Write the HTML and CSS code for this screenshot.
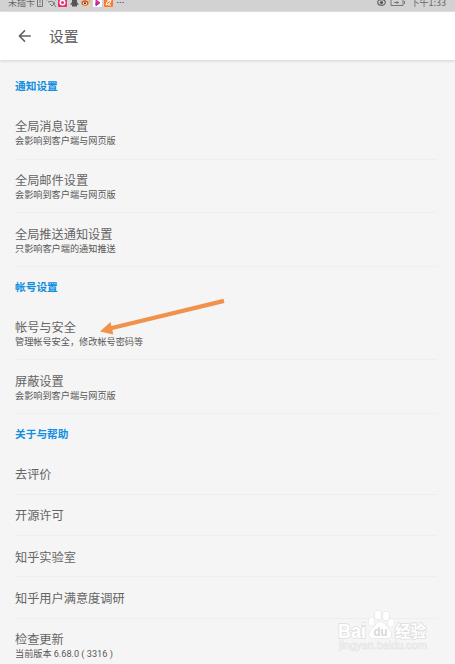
FILE: index.html
```html
<!DOCTYPE html>
<html lang="zh-CN">
<head>
<meta charset="utf-8">
<title>设置</title>
<link rel="stylesheet" href="styles.css">
</head>
<body>
<div class="screen">
  <div class="status">
    <span class="status-text">未插卡</span>
    <svg class="status-icons" width="92" height="11" viewBox="0 0 92 11">
      <g fill="none" stroke="#777" stroke-width="1">
        <path d="M1.500-1h5v7.500h-5zM4 0v3M4 4v1.300"/>
        <path d="M10 0q5-3 10 0M12 2q4-2 7 1M14 4l2 2 3-3M17 3l3 4"/>
      </g>
      <rect x="22" y="-2" width="9" height="9" rx="1" fill="#ef2e68"/>
      <circle cx="26.500" cy="2.500" r="2.300" fill="#ef2e68" stroke="#fff" stroke-width="1.500"/>
      <path d="M36-1h5v3l2 3-2-.5v2h-5v-2l-2 .5 2-3z" fill="#555"/>
      <rect x="45" y="-2" width="9" height="9" rx="1" fill="#efcf9b"/>
      <ellipse cx="49" cy="3" rx="3.500" ry="2.800" fill="#cf5b32"/>
      <ellipse cx="49" cy="3.300" rx="2" ry="1.600" fill="#fff"/>
      <circle cx="49" cy="3.300" r="1" fill="#222"/>
      <path d="M50-.5q4-1 4 3" stroke="#ef9b22" fill="none"/>
      <rect x="57" y="-2" width="9" height="9" rx="1" fill="#fff"/>
      <path d="M60 0v5.500l4-2.700z" fill="#e5288b" stroke="#e5288b"/>
      <path d="M60 3v2.500l2.500-1.700" fill="none" stroke="#6d39d3"/>
      <rect x="68" y="-2" width="9" height="9" rx="1" fill="#f47a2d"/>
      <path d="M70 5l1-3 4-2-1 3zM71 0h4M72 5h3" fill="none" stroke="#fff"/>
      <path d="M81 2.500h7" stroke="#666" stroke-width="1.200" stroke-dasharray="1.500 1.200"/>
    </svg>
    <svg class="status-battery" width="32" height="11" viewBox="0 0 32 11">
      <ellipse cx="5.500" cy="2.500" rx="3.800" ry="2.800" fill="none" stroke="#666" stroke-width="1.200"/>
      <circle cx="5.500" cy="2.500" r="1.600" fill="#555"/>
      <path d="M15-1h12v6.500H15zM28.500 1v3M18 2.500h5M21 1v3" fill="none" stroke="#777" stroke-width="1"/>
    </svg>
    <span class="status-text status-time">下午1:33</span>
  </div>
  <header class="bar">
    <svg width="14" height="14" viewBox="0 0 14 14" fill="none" stroke="#606060" stroke-width="1.500"><path d="M12.800 7H1.500M7 1.400L1.400 7 7 12.600"/></svg>
    <h1>设置</h1>
  </header>
  <main>
    <h2 class="first">通知设置</h2>
    <div class="row double"><div class="title">全局消息设置</div><div class="sub">会影响到客户端与网页版</div></div>
    <div class="row double"><div class="title">全局邮件设置</div><div class="sub">会影响到客户端与网页版</div></div>
    <div class="row double"><div class="title">全局推送通知设置</div><div class="sub">只影响客户端的通知推送</div></div>
    <h2>帐号设置</h2>
    <div class="row double"><div class="title">帐号与安全</div><div class="sub">管理帐号安全，修改帐号密码等</div></div>
    <div class="row double"><div class="title">屏蔽设置</div><div class="sub">会影响到客户端与网页版</div></div>
    <h2>关于与帮助</h2>
    <div class="row"><div class="title">去评价</div></div>
    <div class="row"><div class="title">开源许可</div></div>
    <div class="row"><div class="title">知乎实验室</div></div>
    <div class="row"><div class="title">知乎用户满意度调研</div></div>
    <div class="row double"><div class="title">检查更新</div><div class="sub">当前版本 <span class="version">6.68.0 ( 3316 )</span></div></div>
  </main>
  <svg class="arrow" width="130" height="42" viewBox="0 0 130 42"><path d="M5 36.500L15.500 27l.9 4L128.500 3.800l1 4.200L17.400 35l.9 4.500z" fill="#f0924c"/></svg>
  <svg class="mark" width="100" height="48" viewBox="0 0 100 48">
    <g class="mark-shape">
      <ellipse cx="25.500" cy="15.500" rx="3" ry="4"/>
      <ellipse cx="32" cy="9" rx="3.200" ry="4.600"/>
      <ellipse cx="40" cy="10" rx="3.200" ry="4.600"/>
      <ellipse cx="45" cy="17" rx="3" ry="4"/>
      <path d="M34.500 16c4 0 6 5 9 8 4 5 1 9-4 8h-10c-7 1-8-4-4-8 3-3 5-8 9-8z"/>
    </g>
    <text class="mark-latin" x="-8" y="31.500" textLength="28" lengthAdjust="spacingAndGlyphs">Bai</text>
    <text class="mark-du" x="27.500" y="30" textLength="14" lengthAdjust="spacingAndGlyphs">du</text>
    <text class="mark-cjk" x="49" y="30.500" textLength="31" lengthAdjust="spacingAndGlyphs">经验</text>
    <text class="mark-url" x="-7" y="43" textLength="88" lengthAdjust="spacingAndGlyphs">jingyan.baidu.com</text>
  </svg>
</div>
</body>
</html>
```
FILE: styles.css
```css
* { box-sizing: border-box; }
body { margin: 0; font-family: "Noto Sans CJK SC", sans-serif; background: #f5f5f5; }
.screen { position: relative; width: 455px; height: 664px; overflow: hidden; }
.status { display: flex; align-items: flex-start; height: 12px; padding: 0 9px 0 8px; overflow: hidden; background: #d2d2d2; border-bottom: 1px solid #e4e4e4; }
.status-text { font-size: 9px; line-height: 12px; height: 12px; margin-top: -3px; color: #666; white-space: nowrap; }
.status-icons { margin-left: 1px; }
.status-battery { margin-left: auto; margin-right: 3px; }
.bar { display: flex; align-items: center; height: 48px; padding-left: 18px; gap: 17px; background: #fff; box-shadow: 0 1px 3px rgba(0, 0, 0, .14); position: relative; }
h1 { margin: 0; font-size: 14.800px; line-height: 20px; font-weight: 400; color: #606060; }
main { padding: 0 18px 0 15px; }
h2 { margin: 0; height: 39.500px; padding-top: 12px; font-size: 10.700px; line-height: 16px; font-weight: 700; color: #118ee0; }
h2.first { height: 45.750px; padding-top: 18px; }
.row { height: 41.250px; padding-top: 12.500px; border-bottom: 1px solid #eee; }
.row.double { height: 53.750px; }
.title { font-size: 12.200px; line-height: 16px; color: #646464; }
.sub { font-size: 9.170px; line-height: 13px; color: #585858; }
.version { font-family: Roboto, "Noto Sans CJK SC", sans-serif; }
.arrow { position: absolute; left: 95px; top: 295px; }
.mark { position: absolute; left: 346px; top: 606px; overflow: visible; }
.mark-shape, .mark-latin, .mark-cjk { fill: #fff; stroke: #dedede; stroke-width: 1; paint-order: stroke; }
.mark-latin, .mark-du { font-family: "Liberation Sans", sans-serif; font-weight: 700; }
.mark-latin { font-size: 20px; stroke-width: 1.600; }
.mark-du { font-size: 13px; fill: #d8d8d8; }
.mark-cjk { font-size: 16px; font-weight: 700; stroke-width: 1.600; }
.mark-url { font-family: "Liberation Sans", sans-serif; font-size: 10px; fill: #fafafa; stroke: #e5e5e5; stroke-width: .6; }
```
